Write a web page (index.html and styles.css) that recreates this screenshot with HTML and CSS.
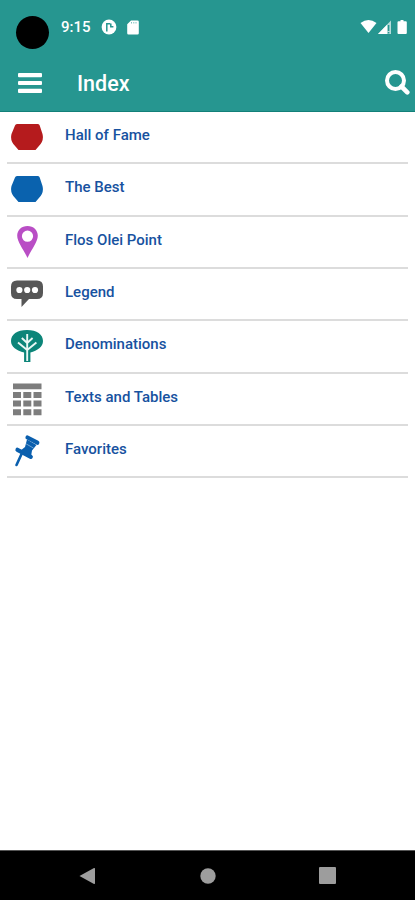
FILE: index.html
```
<!DOCTYPE html>
<html lang="en">
<head>
	<meta charset="UTF-8">
	<title>Index</title>
	<link rel="stylesheet" href="styles.css">
</head>
<body>
	<header class="header">
		<div class="status">
			<i class="camera"></i>
			<span class="time">9:15</span>
			<svg class="app" width="16" height="16" viewBox="0 0 16 16">
				<circle cx="8" cy="8" r="7.4" fill="#fff"/>
				<path d="M5.8 12.5V4.8h3.4M9.8 4.6v3.2h2.6" fill="none" stroke="#269690" stroke-width="1.5"/>
			</svg>
			<svg class="card" width="12" height="15" viewBox="0 0 12 15">
				<path d="M4 .5h6.5a1.300 1.300 0 0 1 1.300 1.300v11.400a1.300 1.300 0 0 1-1.300 1.300h-9A1.300 1.300 0 0 1 .2 13.200V4.300z" fill="#fff"/>
				<path d="M4.500 2v1.500M6.800 2v1.500M9 2v1.500" stroke="#7fc3bf" stroke-width="1"/>
			</svg>
			<svg class="signal" width="48" height="16" viewBox="0 0 48 16">
				<path d="M.5 4Q8.500-2 16.500 4L8.500 14z" fill="#fff"/>
				<path d="M18 15L31 1.500V15z" fill="#b5dcda"/>
				<path d="M18 15l9-9.300V15z" fill="#fff"/>
				<path d="M28.600 6v6M28.600 13v1.500" stroke="#269690" stroke-width="1.500"/>
				<path d="M40.500 1h3v1.300h2.300q1 0 1 1V14q0 1-1 1h-7.300q-1 0-1-1V3.300q0-1 1-1h2z" fill="#fff"/>
			</svg>
		</div>
		<div class="bar">
			<svg class="menu" width="24" height="20" viewBox="0 0 24 20">
				<rect width="24" height="4.200" rx="1" fill="#fff"/>
				<rect y="7.900" width="24" height="4.200" rx="1" fill="#fff"/>
				<rect y="15.800" width="24" height="4.200" rx="1" fill="#fff"/>
			</svg>
			<h1 class="title">Index</h1>
			<svg class="search" width="25" height="25" viewBox="0 0 25 25">
				<circle cx="10.500" cy="10.500" r="8.500" fill="none" stroke="#fff" stroke-width="4"/>
				<path d="M16.500 16.500l5.800 5.800" stroke="#fff" stroke-width="4.600" stroke-linecap="round"/>
			</svg>
		</div>
	</header>
	<ul class="list">
		<li class="item">
			<svg class="icon" viewBox="0 0 34 34">
				<path d="M7 4h21q1.300 0 1.700 1.500L32.500 14q1.800 7-4 12.500L25.500 30H8.500L5.500 26.500Q-.3 21 1.500 14L5 5.500Q5.500 4 7 4z" fill="#b51b1d"/>
			</svg>
			Hall of Fame
		</li>
		<li class="item">
			<svg class="icon" viewBox="0 0 34 34">
				<path d="M7 4h21q1.300 0 1.700 1.500L32.500 14q1.800 7-4 12.500L25.500 30H8.500L5.500 26.500Q-.3 21 1.500 14L5 5.500Q5.500 4 7 4z" fill="#0a62ae"/>
			</svg>
			The Best
		</li>
		<li class="item">
			<svg class="icon" viewBox="0 0 34 34">
				<path fill-rule="evenodd" d="M17.500 1C11.500 1 7.200 5.200 7.200 10.800c0 6.400 6.800 14.400 10.300 22.200 3.500-7.800 10.300-15.800 10.300-22.200C27.800 5.200 23.500 1 17.500 1zm0 4.600a5.600 5.600 0 1 1 0 11.200 5.600 5.600 0 0 1 0-11.200z" fill="#b94ec5"/>
			</svg>
			Flos Olei Point
		</li>
		<li class="item">
			<svg class="icon" viewBox="0 0 34 34">
				<path d="M7 3.500h20q6 0 6 6v6.500q0 6-6 6h-8L11.500 30v-8H7q-6 0-6-6V9.500q0-6 6-6z" fill="#575757"/>
				<circle cx="9.400" cy="13" r="3.100" fill="#fff"/>
				<circle cx="17.200" cy="13" r="3.100" fill="#fff"/>
				<circle cx="25" cy="13" r="3.100" fill="#fff"/>
			</svg>
			Legend
		</li>
		<li class="item">
			<svg class="icon" viewBox="0 0 34 34">
				<path d="M17 1C27 1 33 5.500 33 12c0 6-5.500 9.500-12.600 11.500V33h-6.300v-9.500C6.500 21.500 1 18 1 12 1 5.500 7 1 17 1z" fill="#0c8579"/>
				<path d="M17.200 5v27M17.200 14l-5.400-5M17.200 21L8 13.500M17.200 14l5.400-5M17.200 21l9.200-7.500" fill="none" stroke="#e9f7f4" stroke-width="1.900"/>
			</svg>
			Denominations
		</li>
		<li class="item">
			<svg class="icon" viewBox="0 0 34 34">
				<path d="M3 1.500h28.500v5.700H3zM3 10h8v6H3zM13.300 10h8v6h-8zM23.500 10h8v6h-8zM3 18.500h8v6H3zM13.300 18.500h8v6h-8zM23.500 18.500h8v6h-8zM3 27.200h8v6H3zM13.300 27.200h8v6h-8zM23.500 27.200h8v6h-8z" fill="#7d7d7d"/>
			</svg>
			Texts and Tables
		</li>
		<li class="item">
			<svg class="icon" viewBox="0 0 34 34">
				<path d="M17.500 3.500l9.800 5.200M7.500 15.800l13.300 7" stroke="#0a5fae" stroke-width="4.200" stroke-linecap="round"/>
				<path d="M17 5.500l9.500 5.500-4.500 5.500-1 6L10 17l5-4z" fill="#0a5fae"/>
				<path d="M16 9.800l7.500 4.300" stroke="#fff" stroke-opacity=".6" stroke-width=".7"/>
				<path d="M12 19L6.500 31" stroke="#0a5fae" stroke-width="2.600" stroke-linecap="round"/>
			</svg>
			Favorites
		</li>
	</ul>
	<footer class="nav">
		<svg width="17" height="18" viewBox="0 0 17 18"><path d="M.5 9L15 1q1-.3 1 .7v14.600q0 1-1 .7z" fill="#9d9d9d"/></svg>
		<svg width="16" height="16" viewBox="0 0 16 16"><circle cx="8" cy="8" r="7.700" fill="#9d9d9d"/></svg>
		<svg width="17" height="17" viewBox="0 0 17 17"><rect width="17" height="17" rx="1" fill="#9d9d9d"/></svg>
	</footer>
</body>
</html>
```
FILE: styles.css
```
html,body{
	height: 100%;
	margin: 0;
	overflow: hidden;
}
body{
	display: flex;
	flex-direction: column;
	background-color: white;
	font-family: Roboto, "Liberation Sans", sans-serif;
}
svg{
	display: block;
	flex: none;
}
.header{
	box-sizing: border-box;
	height: 112px;
	background-color: #269690;
	border-bottom: 1px solid #128079;
	color: white;
}
.status{
	display: flex;
	align-items: center;
	height: 54px;
	padding-left: 16px;
	padding-right: 7px;
}
.camera{
	width: 33px;
	height: 33px;
	margin-top: 11px;
	border-radius: 50%;
	background-color: black;
}
.time{
	width: 40px;
	margin-left: 12px;
	font-size: 15px;
	font-weight: 500;
}
.card{
	margin-left: 10px;
}
.signal{
	margin-left: auto;
}
.bar{
	display: flex;
	align-items: center;
	height: 57px;
	padding-left: 18px;
	padding-right: 5px;
}
.title{
	margin: 2px 0 0 35px;
	font-size: 21.5px;
	font-weight: 500;
}
.search{
	margin-left: auto;
}
.list{
	flex: 1;
	margin: 0;
	padding: 0 7px;
	list-style: none;
}
.item{
	display: flex;
	align-items: center;
	box-sizing: border-box;
	height: 52.35px;
	padding-bottom: 4.4px;
	border-bottom: 2px solid #dcdcdc;
	color: #1752a0;
	font-size: 15px;
	font-weight: 500;
}
.icon{
	width: 34px;
	height: 34px;
	margin: 4px 21px 0 3px;
}
/* 底部导航 */
.nav{
	display: flex;
	align-items: center;
	justify-content: space-between;
	box-sizing: border-box;
	height: 50px;
	padding: 0 79px;
	border-top: 1px solid #555;
	background-color: black;
}
```
